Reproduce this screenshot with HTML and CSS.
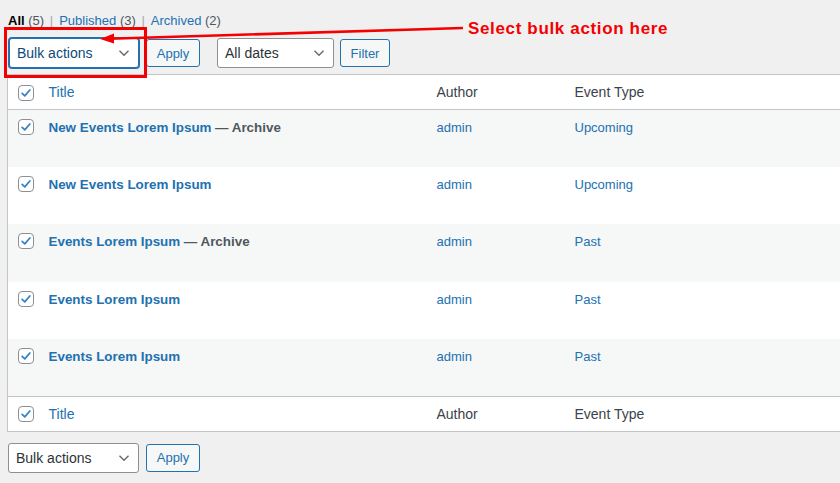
FILE: index.html
```html
<!DOCTYPE html>
<html>
<head>
<meta charset="utf-8">
<link rel="stylesheet" href="styles.css">
</head>
<body>
<div class="page">
  <ul class="subsubsub">
    <li><span class="current">All</span> <span class="count">(5)</span> <span class="sep">|</span></li>
    <li><a>Published</a> <span class="count">(3)</span> <span class="sep">|</span></li>
    <li><a>Archived</a> <span class="count">(2)</span></li>
  </ul>

  <div class="tablenav top">
    <div class="select focused bulk"><span>Bulk actions</span><svg viewBox="0 0 16 16" class="chev"><path d="M3.5 5.8 8 10.2l4.5-4.4" /></svg></div>
    <button class="btn apply">Apply</button>
    <div class="select dates"><span>All dates</span><svg viewBox="0 0 16 16" class="chev"><path d="M3.5 5.8 8 10.2l4.5-4.4" /></svg></div>
    <button class="btn filter">Filter</button>
  </div>

  <table class="list">
    <thead>
      <tr class="head">
        <th class="cb"><span class="check"><svg viewBox="0 0 16 16"><path d="M3.6 8.4 6.6 11.2 12.4 4.6" /></svg></span></th>
        <th class="col-title"><a>Title</a></th>
        <th class="col-author">Author</th>
        <th class="col-type">Event Type</th>
      </tr>
    </thead>
    <tbody>
      <tr class="alt">
        <td class="cb"><span class="check"><svg viewBox="0 0 16 16"><path d="M3.6 8.4 6.6 11.2 12.4 4.6" /></svg></span></td>
        <td class="col-title"><a class="row-title">New Events Lorem Ipsum</a> <span class="state">— Archive</span></td>
        <td class="col-author"><a>admin</a></td>
        <td class="col-type"><a>Upcoming</a></td>
      </tr>
      <tr>
        <td class="cb"><span class="check"><svg viewBox="0 0 16 16"><path d="M3.6 8.4 6.6 11.2 12.4 4.6" /></svg></span></td>
        <td class="col-title"><a class="row-title">New Events Lorem Ipsum</a></td>
        <td class="col-author"><a>admin</a></td>
        <td class="col-type"><a>Upcoming</a></td>
      </tr>
      <tr class="alt">
        <td class="cb"><span class="check"><svg viewBox="0 0 16 16"><path d="M3.6 8.4 6.6 11.2 12.4 4.6" /></svg></span></td>
        <td class="col-title"><a class="row-title">Events Lorem Ipsum</a> <span class="state">— Archive</span></td>
        <td class="col-author"><a>admin</a></td>
        <td class="col-type"><a>Past</a></td>
      </tr>
      <tr>
        <td class="cb"><span class="check"><svg viewBox="0 0 16 16"><path d="M3.6 8.4 6.6 11.2 12.4 4.6" /></svg></span></td>
        <td class="col-title"><a class="row-title">Events Lorem Ipsum</a></td>
        <td class="col-author"><a>admin</a></td>
        <td class="col-type"><a>Past</a></td>
      </tr>
      <tr class="alt">
        <td class="cb"><span class="check"><svg viewBox="0 0 16 16"><path d="M3.6 8.4 6.6 11.2 12.4 4.6" /></svg></span></td>
        <td class="col-title"><a class="row-title">Events Lorem Ipsum</a></td>
        <td class="col-author"><a>admin</a></td>
        <td class="col-type"><a>Past</a></td>
      </tr>
    </tbody>
    <tfoot>
      <tr class="foot">
        <th class="cb"><span class="check"><svg viewBox="0 0 16 16"><path d="M3.6 8.4 6.6 11.2 12.4 4.6" /></svg></span></th>
        <th class="col-title"><a>Title</a></th>
        <th class="col-author">Author</th>
        <th class="col-type">Event Type</th>
      </tr>
    </tfoot>
  </table>

  <div class="tablenav bottom">
    <div class="select bulk"><span>Bulk actions</span><svg viewBox="0 0 16 16" class="chev"><path d="M3.5 5.8 8 10.2l4.5-4.4" /></svg></div>
    <button class="btn apply">Apply</button>
  </div>

  <div class="annot-box"></div>
  <svg class="annot-arrow" viewBox="0 0 840 483" width="840" height="483">
    <line x1="110" y1="38.7" x2="463" y2="28" />
    <polygon points="100,39 114,33.6 114,43.6" />
  </svg>
  <div class="annot-text">Select bulk action here</div>
</div>
</body>
</html>
```

FILE: styles.css
```css
html, body {
  margin: 0;
  padding: 0;
  background: #f0f0f1;
  overflow: hidden;
}

body {
  font-family: "Liberation Sans", Arial, sans-serif;
  color: #3c434a;
  font-size: 13px;
}

.page {
  position: relative;
  width: 840px;
  height: 483px;
  padding-left: 7px;
  box-sizing: border-box;
}

a {
  color: #2271b1;
  text-decoration: none;
}

.subsubsub {
  list-style: none;
  margin: 0;
  padding: 13px 0 0 1px;
  display: flex;
  font-size: 13px;
  line-height: 16px;
  height: 16px;
}

.subsubsub li {
  margin-right: 6px;
  white-space: pre;
}

.subsubsub .current {
  color: #000;
  font-weight: bold;
}

.subsubsub .count {
  color: #50575e;
}

.subsubsub .sep {
  color: #a7aaad;
  margin-left: 2px;
}

.tablenav {
  display: flex;
  align-items: center;
  margin-left: 1px;
}

.tablenav.top {
  margin-top: 9px;
  height: 30px;
}

.tablenav.bottom {
  margin-top: 11px;
  height: 30px;
}

.select {
  box-sizing: border-box;
  height: 30px;
  border: 1px solid #8c8f94;
  border-radius: 3px;
  background: #fff;
  display: flex;
  align-items: center;
  justify-content: space-between;
  padding: 0 6px 0 7px;
  font-size: 14px;
  color: #2c3338;
}

.select.focused {
  border-color: #2271b1;
  box-shadow: 0 0 0 1px #2271b1;
  color: #0a4b78;
  margin-left: 1px;
  width: 130px !important;
}

.select .chev {
  width: 16px;
  height: 16px;
  fill: none;
  stroke: #646970;
  stroke-width: 1.4;
}

.select.bulk {
  width: 131px;
}

.select.dates {
  width: 117px;
  margin-left: 17px;
}

.btn {
  box-sizing: border-box;
  height: 28px;
  border: 1px solid #2271b1;
  border-radius: 3px;
  background: #f6f7f7;
  color: #2271b1;
  font-family: inherit;
  font-size: 13px;
  padding: 0 9px;
}

.btn.apply {
  margin-left: 7px;
  width: 54px;
}

.btn.filter {
  margin-left: 6px;
  width: 50px;
}

.list {
  margin-top: 6px;
  width: 850px;
  border-collapse: collapse;
  background: #fff;
  border: 1px solid #c3c4c7;
  table-layout: fixed;
}

.list th,
.list td {
  text-align: left;
  padding: 0 8px;
  vertical-align: top;
}

.list th {
  font-weight: normal;
  font-size: 14px;
  color: #3c434a;
  height: 34px;
  vertical-align: middle;
}

.list thead tr {
  border-bottom: 1px solid #c3c4c7;
}

.list tfoot tr {
  border-top: 1px solid #c3c4c7;
}

.list td {
  height: 57.4px;
  box-sizing: border-box;
  padding-top: 9px;
  font-size: 13px;
  line-height: 17px;
}

.list tr.alt {
  background: #f6f7f7;
}

.list .cb {
  width: 33px;
  padding: 0 0 0 10px;
  box-sizing: border-box;
}

.list td.cb {
  padding-top: 9px;
}

.list th.cb .check {
  margin-top: 1px;
}

.col-title {
  width: 388px;
  box-sizing: border-box;
}

.col-author {
  width: 138px;
  box-sizing: border-box;
}

.check {
  display: block;
  box-sizing: border-box;
  width: 16px;
  height: 16px;
  border: 1px solid #8c8f94;
  border-radius: 4px;
  background: #fff;
}

.check svg {
  display: block;
  width: 14px;
  height: 14px;
  fill: none;
  stroke: #3582c4;
  stroke-width: 2;
  stroke-linecap: round;
  stroke-linejoin: round;
}

.row-title {
  font-weight: bold;
  font-size: 13.4px;
  color: #2271b1;
}

.state {
  font-weight: bold;
  font-size: 13.4px;
  color: #50575e;
}

.annot-box {
  position: absolute;
  left: 4px;
  top: 27px;
  width: 143px;
  height: 51px;
  box-sizing: border-box;
  border: 3px solid #f40000;
}

.annot-arrow {
  position: absolute;
  left: 0;
  top: 0;
  pointer-events: none;
}

.annot-arrow line {
  stroke: #f40000;
  stroke-width: 2.6;
}

.annot-arrow polygon {
  fill: #f40000;
}

.annot-text {
  position: absolute;
  left: 468px;
  top: 19px;
  font-family: "Liberation Sans", Arial, sans-serif;
  font-weight: bold;
  font-size: 17px;
  letter-spacing: 0.65px;
  line-height: 20px;
  color: #f40000;
  white-space: nowrap;
}
```
